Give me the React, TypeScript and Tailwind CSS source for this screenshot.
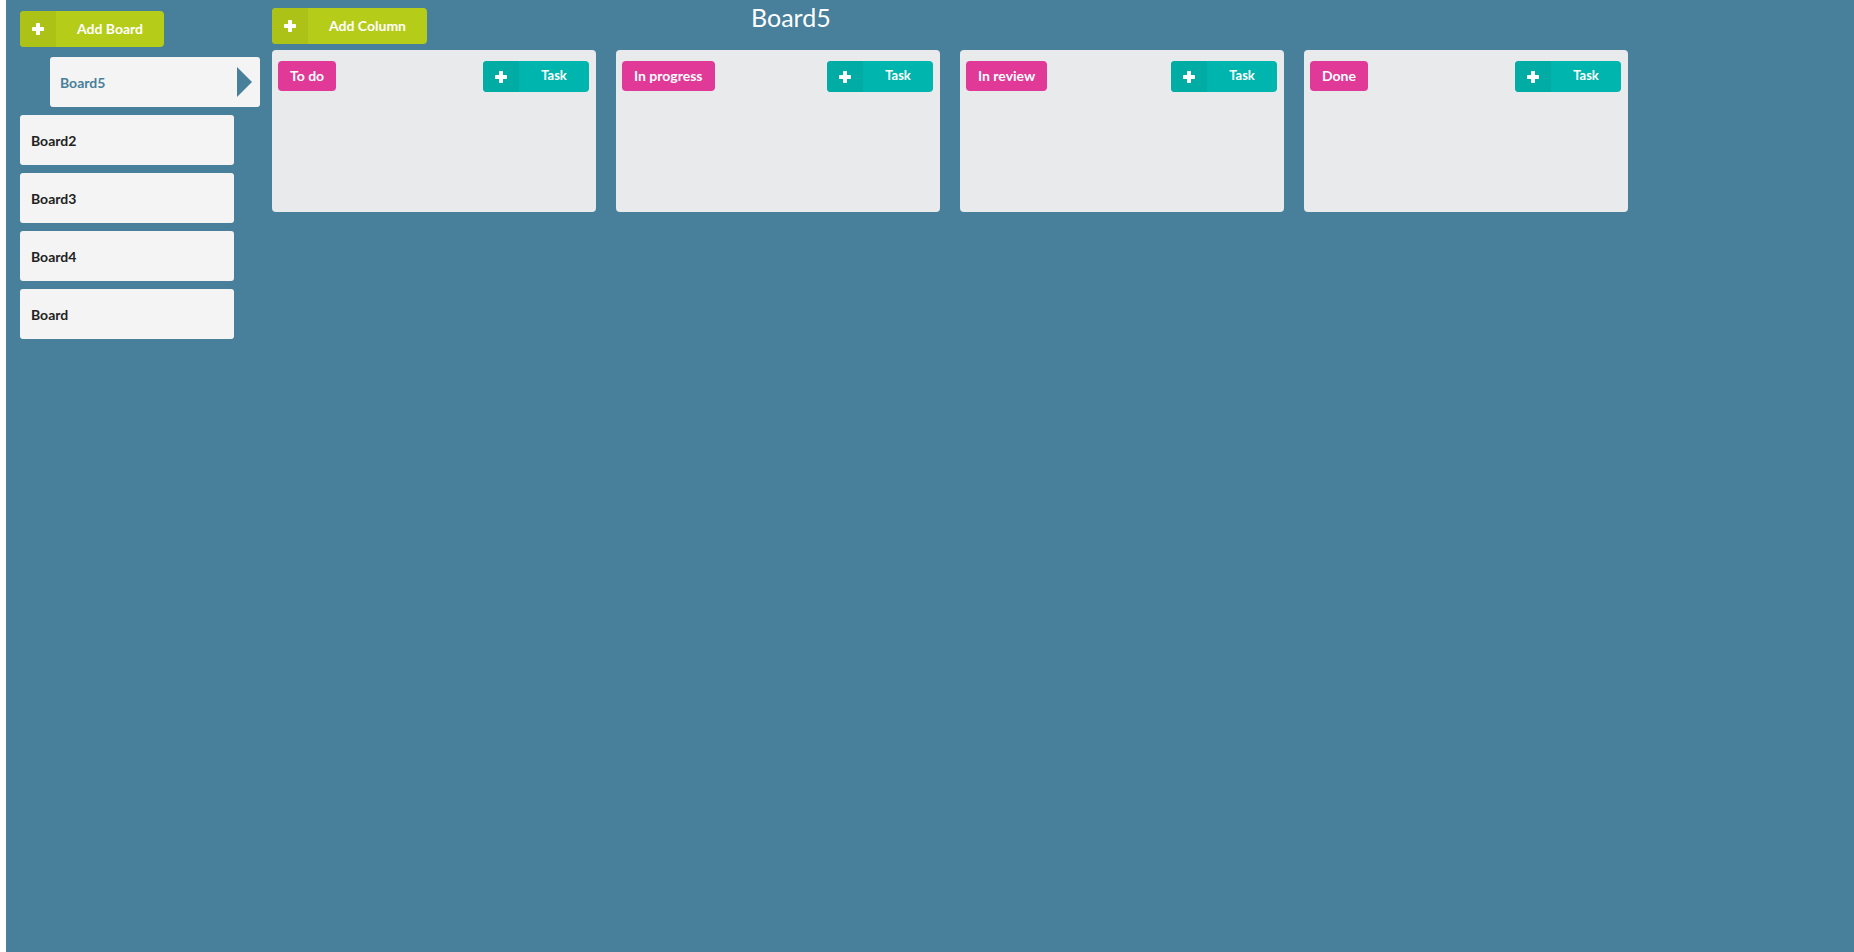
import React from 'react';

const boards = ['Board5', 'Board2', 'Board3', 'Board4', 'Board'];
const columns = ['To do', 'In progress', 'In review', 'Done'];

function PlusIcon() {
  return (
    <svg width="12" height="12" viewBox="0 0 12 12" fill="white">
      <rect x="4" y="0" width="4" height="12" rx="0.8" />
      <rect x="0" y="4" width="12" height="4" rx="0.8" />
    </svg>
  );
}

interface LabeledButtonProps {
  label: string;
  className: string;
  iconClassName: string;
  textClassName: string;
}

function LabeledButton({ label, className, iconClassName, textClassName }: LabeledButtonProps) {
  return (
    <button className={`flex rounded-[4px] text-white font-bold overflow-hidden ${className}`}>
      <span className={`w-[36px] h-full flex items-center justify-center ${iconClassName}`}>
        <PlusIcon />
      </span>
      <span className={`flex-1 h-full flex items-center justify-center pb-[2px] ${textClassName}`}>{label}</span>
    </button>
  );
}

function Column({ title }: { title: string }) {
  return (
    <div className="w-[324px] h-[162px] bg-[#e9eaec] rounded-[4px] flex justify-between items-start pl-[6px] pr-[7px] pt-[11px]">
      <div className="h-[30px] px-[12px] pb-[2px] rounded-[4px] bg-[#e03997] text-white font-bold text-[14px] flex items-center">
        {title}
      </div>
      <LabeledButton
        label="Task"
        className="w-[106px] h-[31px] bg-[#00b5ad]"
        iconClassName="bg-[#00aca4]"
        textClassName="text-[13px]"
      />
    </div>
  );
}

export default function App() {
  const [active, ...rest] = boards;
  return (
    <div className="flex h-screen w-full bg-white font-['Lato',sans-serif]">
      <div className="w-[6px] shrink-0" />
      <div className="flex flex-1 bg-[#487f9b]">
        <aside className="w-[266px] shrink-0 pl-[14px] pt-[11px] flex flex-col">
          <LabeledButton
            label="Add Board"
            className="w-[144px] h-[36px] bg-[#b5cc18]"
            iconClassName="bg-[#acc217]"
            textClassName="text-[14px]"
          />
          <div className="mt-[10px] ml-[30px] w-[210px] h-[50px] bg-[#f4f4f4] rounded-[3px] flex items-center justify-between pl-[10px] pr-[8px]">
            <span className="text-[14px] font-bold text-[#487f9b]">{active}</span>
            <span className="w-0 h-0 border-y-[15px] border-y-transparent border-l-[15px] border-l-[#487f9b]" />
          </div>
          <div className="mt-[8px] flex flex-col gap-[8px]">
            {rest.map((b) => (
              <div
                key={b}
                className="w-[214px] h-[50px] bg-[#f4f4f4] rounded-[3px] flex items-center pl-[11px] text-[14px] font-bold text-[#222222]"
              >
                {b}
              </div>
            ))}
          </div>
        </aside>
        <main className="flex-1 pt-[8px]">
          <div className="flex items-start h-[36px]">
            <LabeledButton
              label="Add Column"
              className="w-[155px] h-[36px] bg-[#b5cc18]"
              iconClassName="bg-[#acc217]"
              textClassName="text-[14px]"
            />
            <h1 className="ml-[324px] text-[25px] leading-[18px] text-white font-normal">Board5</h1>
          </div>
          <div className="mt-[6px] flex gap-[20px]">
            {columns.map((c) => (
              <Column key={c} title={c} />
            ))}
          </div>
        </main>
      </div>
    </div>
  );
}
